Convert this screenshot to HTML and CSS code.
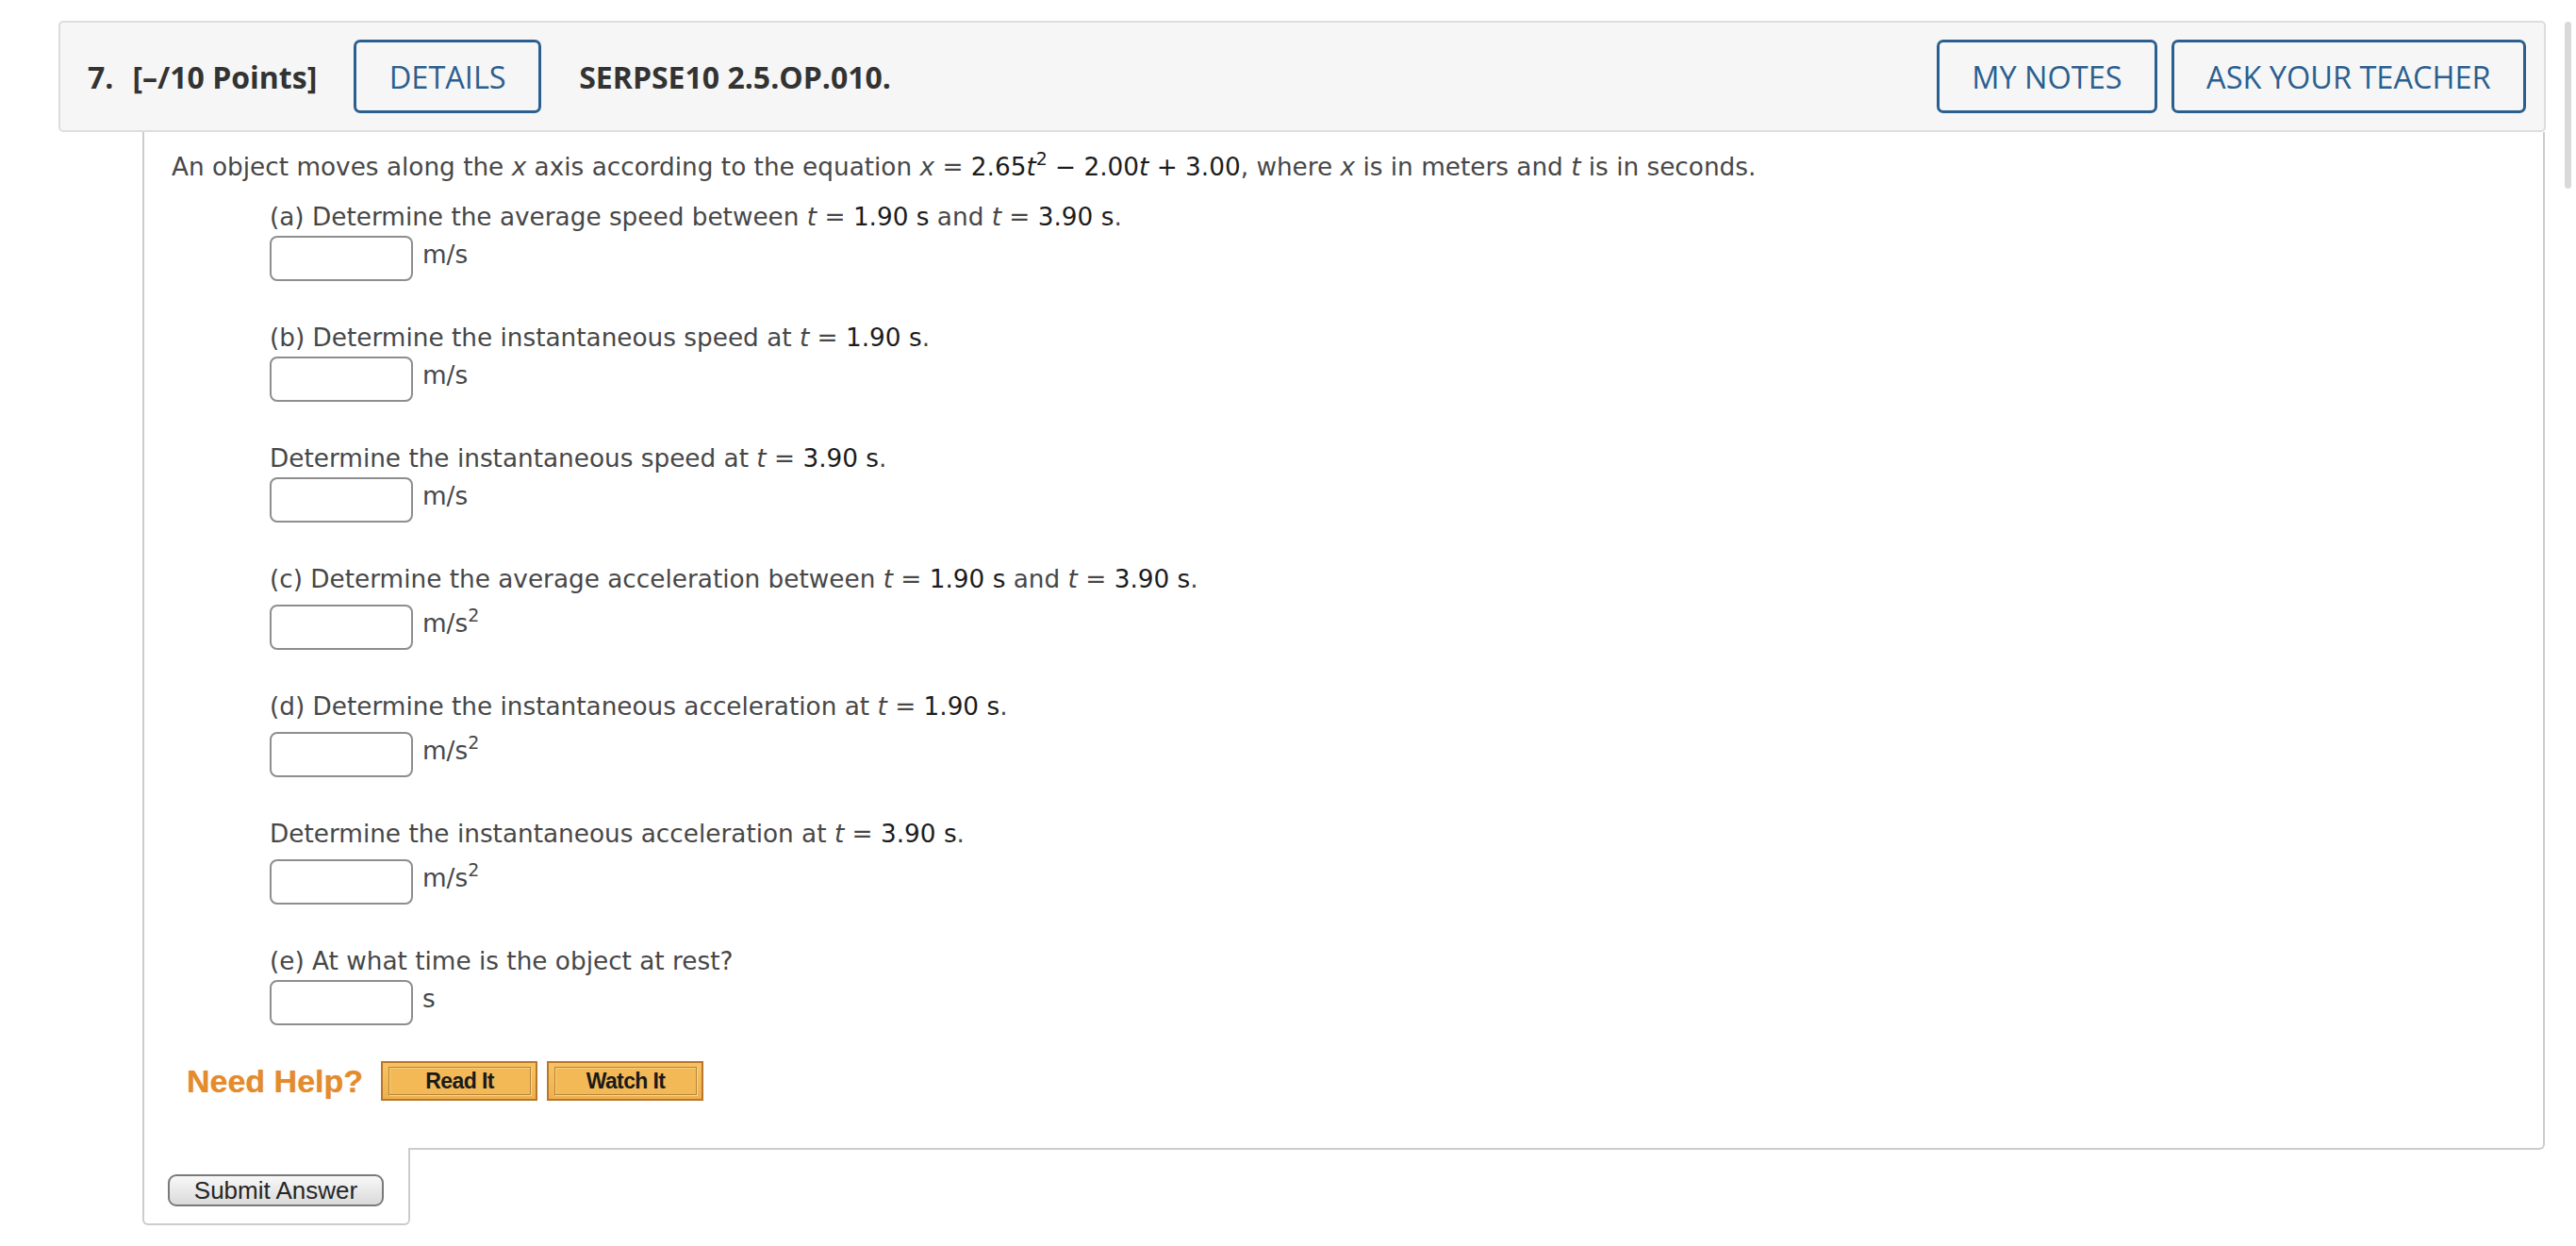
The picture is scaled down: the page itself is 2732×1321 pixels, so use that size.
FILE: index.html
```html
<!DOCTYPE html>
<html lang="en">
<head>
<meta charset="utf-8">
<title>Question 7</title>
<link rel="stylesheet" href="styles.css">
</head>
<body>
<div class="page">
  <div class="qhead">
    <span class="qnum">7.</span>
    <span class="qpts">[–/10 Points]</span>
    <button class="hbtn details">DETAILS</button>
    <span class="qid">SERPSE10 2.5.OP.010.</span>
    <span class="spacer"></span>
    <button class="hbtn notes">MY NOTES</button>
    <button class="hbtn">ASK YOUR TEACHER</button>
  </div>
  <div class="qbody">
    <p class="intro">An object moves along the <i>x</i> axis according to the equation <i>x</i> = <span class="v">2.65<i>t</i><sup>2</sup> − 2.00<i>t</i> + 3.00</span>, where <i>x</i> is in meters and <i>t</i> is in seconds.</p>
    <div class="parts">
      <div class="part">
        <div class="label">(a) Determine the average speed between <i>t</i> = <span class="v">1.90 s</span> and <i>t</i> = <span class="v">3.90 s</span>.</div>
        <div class="answer"><input class="inp" type="text"><span class="unit">m/s</span></div>
      </div>
      <div class="part">
        <div class="label">(b) Determine the instantaneous speed at <i>t</i> = <span class="v">1.90 s</span>.</div>
        <div class="answer"><input class="inp" type="text"><span class="unit">m/s</span></div>
      </div>
      <div class="part">
        <div class="label">Determine the instantaneous speed at <i>t</i> = <span class="v">3.90 s</span>.</div>
        <div class="answer"><input class="inp" type="text"><span class="unit">m/s</span></div>
      </div>
      <div class="part sq">
        <div class="label">(c) Determine the average acceleration between <i>t</i> = <span class="v">1.90 s</span> and <i>t</i> = <span class="v">3.90 s</span>.</div>
        <div class="answer"><input class="inp" type="text"><span class="unit">m/s<sup>2</sup></span></div>
      </div>
      <div class="part sq">
        <div class="label">(d) Determine the instantaneous acceleration at <i>t</i> = <span class="v">1.90 s</span>.</div>
        <div class="answer"><input class="inp" type="text"><span class="unit">m/s<sup>2</sup></span></div>
      </div>
      <div class="part sq">
        <div class="label">Determine the instantaneous acceleration at <i>t</i> = <span class="v">3.90 s</span>.</div>
        <div class="answer"><input class="inp" type="text"><span class="unit">m/s<sup>2</sup></span></div>
      </div>
      <div class="part">
        <div class="label">(e) At what time is the object at rest?</div>
        <div class="answer"><input class="inp" type="text"><span class="unit">s</span></div>
      </div>
    </div>
    <div class="help">
      <span class="help-title">Need Help?</span>
      <button class="hlp"><span class="hlp-in">Read It</span></button>
      <button class="hlp"><span class="hlp-in">Watch It</span></button>
    </div>
  </div>
  <div class="submit-tab">
    <button class="submit">Submit Answer</button>
  </div>
</div>
<div class="scroll-thumb"></div>
</body>
</html>
```
FILE: styles.css
```css
html, body {
  margin: 0;
  padding: 0;
  background: #ffffff;
}

.page {
  padding: 22px 0 0 62px;
  width: 2638px;
}

/* ---------- header ---------- */
.qhead {
  display: flex;
  align-items: center;
  box-sizing: border-box;
  height: 118px;
  padding: 0 19px 0 29px;
  background: #f6f6f6;
  border: 2px solid #dddddd;
  border-radius: 5px;
  font-family: "Open Sans", sans-serif;
  font-size: 32px;
  color: #333333;
}

.qnum {
  font-weight: 700;
  margin-right: 20px;
}

.qpts {
  font-weight: 700;
  margin-right: 39px;
}

.qid {
  font-weight: 700;
}

.spacer {
  flex: 1;
}

.hbtn {
  font-family: "Open Sans", sans-serif;
  font-size: 32.5px;
  font-weight: 500;
  color: #2b5f8f;
  background: transparent;
  border: 3px solid #2b5f8f;
  border-radius: 7px;
  height: 78px;
  padding: 0 34.5px;
  margin: 0;
}

.details {
  margin-right: 40px;
}

.notes {
  margin-right: 15px;
  padding: 0 34px;
}

/* ---------- question body ---------- */
.qbody {
  margin-left: 89px;
  width: 2548px;
  box-sizing: border-box;
  border: 2px solid #cccccc;
  border-top: none;
  border-radius: 0 0 6px 0;
  padding: 22px 0 50px 29px;
  font-family: "DejaVu Sans", Verdana, sans-serif;
  font-size: 26.3px;
  color: #474747;
}

.intro {
  margin: 0;
  line-height: 30px;
}

.v {
  color: #1c1c1c;
}

sup {
  font-size: 0.72em;
  line-height: 0;
  vertical-align: 0.6em;
}

.parts {
  margin-left: 104px;
  margin-top: 23px;
}

.part {
  margin-bottom: 45px;
}

.part:last-child {
  margin-bottom: 0;
}

.label {
  line-height: 30px;
}

.answer {
  display: flex;
  align-items: flex-start;
  margin-top: 5px;
  height: 48px;
}

.part.sq .answer {
  margin-top: 12px;
}

.inp {
  box-sizing: border-box;
  width: 152px;
  height: 48px;
  margin: 0 10px 0 0;
  padding: 0 8px;
  border: 2px solid #8e8e8e;
  border-radius: 8px;
  background: #ffffff;
  font-family: "DejaVu Sans", sans-serif;
  font-size: 25px;
}

.unit {
  line-height: 30px;
  margin-top: 5px;
}

/* ---------- need help ---------- */
.help {
  display: flex;
  align-items: center;
  height: 42px;
  margin-top: 38px;
  margin-left: 16px;
}

.help-title {
  font-family: "Liberation Sans", Arial, sans-serif;
  font-weight: 700;
  font-size: 34px;
  color: #e38b2d;
  text-shadow: 0 0 1px rgba(227, 139, 45, 0.6);
  margin-right: 19px;
}

.hlp {
  box-sizing: border-box;
  width: 166px;
  height: 42px;
  margin: 0 10px 0 0;
  padding: 4px 5px 4px 6px;
  border: 2px solid #b8762f;
  background: linear-gradient(#f7c362, #efb04c);
  display: flex;
}

.hlp-in {
  flex: 1;
  display: flex;
  align-items: center;
  justify-content: center;
  border: 1px solid #b5843a;
  box-shadow: 1px 1px 0 #fbd594, inset 1px 1px 0 #f9cf7f;
  background: #f3b957;
  font-family: "Liberation Sans", Arial, sans-serif;
  font-weight: 700;
  font-size: 23px;
  color: #1a1a1a;
  letter-spacing: -0.6px;
}

/* ---------- submit tab ---------- */
.submit-tab {
  margin-left: 89px;
  margin-top: -2px;
  width: 284px;
  height: 82px;
  box-sizing: border-box;
  background: #ffffff;
  border: 2px solid #cccccc;
  border-top: none;
  border-radius: 0 0 6px 6px;
  padding: 28px 0 0 25px;
}

.submit {
  box-sizing: border-box;
  width: 229px;
  height: 34px;
  margin: 0;
  padding: 0;
  border: 2px solid #7a7a7a;
  border-radius: 9px;
  background: linear-gradient(#f8f8f8, #dadada);
  font-family: "Liberation Sans", Arial, sans-serif;
  font-size: 26px;
  color: #262626;
  line-height: 30px;
}

/* overlay scrollbar thumb of the frame */
.scroll-thumb {
  position: absolute;
  left: 2720px;
  top: 23px;
  width: 7px;
  height: 177px;
  background: #d9d9d9;
  border-radius: 4px;
}
```
